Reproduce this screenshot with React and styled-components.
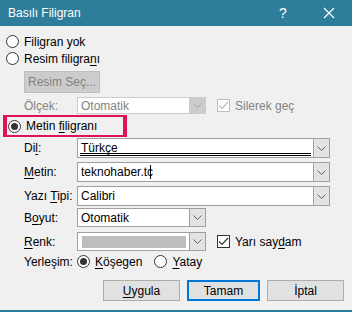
import React from "react"
import styled, { createGlobalStyle } from "styled-components"

const Global = createGlobalStyle`
body { margin: 0; background: #f0f0f0; }
* { box-sizing: border-box; }
`

const Window = styled.div`
width: 352px;
height: 312px;
background: #f0f0f0;
border-bottom: 2px solid #2e7d9a;
display: flex;
flex-direction: column;
font-family: "Liberation Sans", Arial, sans-serif;
font-size: 12px;
color: #000;
`

const TitleBar = styled.div`
height: 26px;
flex-shrink: 0;
background: #2e7d9a;
color: #fff;
display: flex;
align-items: center;
padding-left: 8px;
font-size: 12px;
`
const Title = styled.div`
flex: 1;
`
const TitleBtn = styled.div`
width: 46px;
height: 26px;
display: flex;
align-items: center;
justify-content: center;
font-size: 14px;
`

const Body = styled.div`
display: flex;
flex-direction: column;
padding: 7px 8px 0 6px;
`

const RadioLine = styled.label`
display: flex;
align-items: center;
gap: 5px;
height: 17px;
margin-left: ${p => p.$ml || 0}px;
`

const RadioCircle = styled.span`
width: 13px;
height: 13px;
border-radius: 50%;
border: 1px solid #333;
background: #fff;
display: flex;
align-items: center;
justify-content: center;
flex-shrink: 0;
&::after {
  content: "";
  width: 7px;
  height: 7px;
  border-radius: 50%;
  background: ${p => (p.$on ? "#333" : "transparent")};
}
`

const U = styled.span`
text-decoration: underline;
text-underline-offset: 2px;
`

const GreyButton = styled.div`
margin: 4px 0 0 18px;
width: 76px;
height: 22px;
background: #cccccc;
border: 1px solid #bfbfbf;
color: #838383;
display: flex;
align-items: center;
justify-content: center;
`

const Row = styled.div`
display: flex;
align-items: center;
flex-shrink: 0;
height: ${p => p.$h || 20}px;
margin-top: ${p => p.$mt || 0}px;
padding-left: 18px;
`

const Label = styled.div`
width: 53px;
color: ${p => (p.$disabled ? "#838383" : "#000")};
`

const ComboBox = styled.div`
width: ${p => p.$w}px;
height: 100%;
display: flex;
border: 1px solid ${p => (p.$disabled ? "#cccccc" : "#a0a0a0")};
background: #fff;
`
const ComboField = styled.div`
flex: 1;
display: flex;
align-items: center;
padding-left: 3px;
color: ${p => (p.$disabled ? "#838383" : "#000")};
position: relative;
`
const DoubleLine = styled.div`
position: absolute;
left: 2px;
right: 2px;
bottom: 1px;
height: 3px;
border-top: 1px solid #000;
border-bottom: 1px solid #000;
`
const Caret = styled.span`
display: inline-block;
width: 1px;
height: 14px;
background: #000;
margin-left: -3px;
`
const Swatch = styled.div`
width: 104px;
height: 12px;
background: #bdbdbd;
margin-left: 1px;
`
const DropBtn = styled.div`
width: 16px;
display: flex;
align-items: center;
justify-content: center;
background: ${p => (p.$disabled ? "#cccccc" : "#e3e3e3")};
border-left: 1px solid ${p => (p.$disabled ? "#cccccc" : "#a0a0a0")};
`

const Check = styled.span`
width: 13px;
height: 13px;
border: 1px solid ${p => (p.$disabled ? "#bcbcbc" : "#333")};
background: #fff;
display: flex;
align-items: center;
justify-content: center;
flex-shrink: 0;
`
const CheckLine = styled.div`
display: flex;
align-items: center;
gap: 5px;
margin-left: 11px;
color: ${p => (p.$disabled ? "#838383" : "#000")};
`

const Highlight = styled.div`
margin: 1px 0 0 -3px;
width: 124px;
height: 22px;
flex-shrink: 0;
border-style: solid;
border-color: #e0105a;
border-width: 2px 4px 2px 4px;
display: flex;
align-items: center;
gap: 5px;
padding-left: 1px;
`

const Buttons = styled.div`
display: flex;
justify-content: flex-end;
gap: 7px;
margin-top: 10px;
`
const Btn = styled.div`
width: ${p => (p.$primary ? 73 : 77)}px;
height: 21px;
display: flex;
align-items: center;
justify-content: center;
background: #e1e1e1;
border: ${p => (p.$primary ? "2px solid #0078d7" : "1px solid #adadad")};
`

const Chevron = ({ color = "#606060" }) => (
  <svg width="9" height="5" viewBox="0 0 9 5">
    <path d="M0.5 0.5 L4.5 4.5 L8.5 0.5" fill="none" stroke={color} strokeWidth="1" />
  </svg>
)

const Tick = ({ color = "#333" }) => (
  <svg width="11" height="9" viewBox="0 0 11 9">
    <path d="M1 4.5 L4 7.5 L10 1" fill="none" stroke={color} strokeWidth="1.2" />
  </svg>
)

function Combo({ w, disabled, children }) {
  return (
    <ComboBox $w={w} $disabled={disabled}>
      <ComboField $disabled={disabled}>{children}</ComboField>
      <DropBtn $disabled={disabled}>
        <Chevron color={disabled ? "#a8a8a8" : "#606060"} />
      </DropBtn>
    </ComboBox>
  )
}

export default function App() {
  return (
    <Window>
      <Global />
      <TitleBar>
        <Title>Basılı Filigran</Title>
        <TitleBtn>?</TitleBtn>
        <TitleBtn>
          <svg width="12" height="12" viewBox="0 0 12 12">
            <path d="M1 1 L11 11 M11 1 L1 11" stroke="#fff" strokeWidth="1.2" />
          </svg>
        </TitleBtn>
      </TitleBar>
      <Body>
        <RadioLine>
          <RadioCircle />
          <span>Fili<U>g</U>ran yok</span>
        </RadioLine>
        <RadioLine>
          <RadioCircle />
          <span>Resim filigra<U>n</U>ı</span>
        </RadioLine>
        <GreyButton>Resim Seç...</GreyButton>
        <Row $h={17} $mt={4}>
          <Label $disabled>Ölçek:</Label>
          <Combo w={129} disabled>Otomatik</Combo>
          <CheckLine $disabled>
            <Check $disabled><Tick color="#bcbcbc" /></Check>
            Silerek geç
          </CheckLine>
        </Row>
        <Highlight>
          <RadioCircle $on />
          <span>Metin <U>fi</U>ligranı</span>
        </Highlight>
        <Row $mt={1}>
          <Label>Di<U>l</U>:</Label>
          <Combo w={253}>Türkçe<DoubleLine /></Combo>
        </Row>
        <Row $mt={4}>
          <Label><U>M</U>etin:</Label>
          <Combo w={253}>teknohaber.tc<Caret /></Combo>
        </Row>
        <Row $mt={4}>
          <Label>Yazı <U>T</U>ipi:</Label>
          <Combo w={253}>Calibri</Combo>
        </Row>
        <Row $mt={2} $h={19}>
          <Label>B<U>o</U>yut:</Label>
          <Combo w={129}>Otomatik</Combo>
        </Row>
        <Row $mt={5} $h={19}>
          <Label><U>R</U>enk:</Label>
          <Combo w={129}><Swatch /></Combo>
          <CheckLine>
            <Check><Tick /></Check>
            <span>Yarı say<U>d</U>am</span>
          </CheckLine>
        </Row>
        <Row $h={17} $mt={2}>
          <Label>Yerleşim:</Label>
          <RadioLine>
            <RadioCircle $on />
            <span><U>K</U>öşegen</span>
          </RadioLine>
          <RadioLine $ml={12}>
            <RadioCircle />
            <span><U>Y</U>atay</span>
          </RadioLine>
        </Row>
        <Buttons>
          <Btn><span><U>U</U>ygula</span></Btn>
          <Btn $primary>Tamam</Btn>
          <Btn>İptal</Btn>
        </Buttons>
      </Body>
    </Window>
  )
}
